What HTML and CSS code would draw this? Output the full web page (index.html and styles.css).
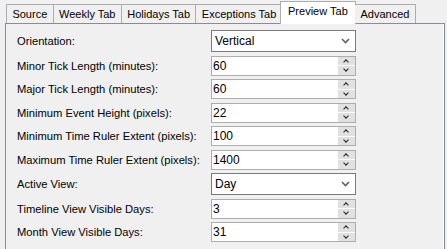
FILE: index.html
```html
<!DOCTYPE html>
<html lang="en">
<head>
    <meta charset="UTF-8">
    <title>Calendar Settings</title>
    <link rel="stylesheet" href="styles.css">
</head>
<body>
    <div class="tabs">
        <div class="tab">Source</div>
        <div class="tab">Weekly Tab</div>
        <div class="tab">Holidays Tab</div>
        <div class="tab">Exceptions Tab</div>
        <div class="tab active">Preview Tab</div>
        <div class="tab">Advanced</div>
    </div>

    <div class="panel">
        <div class="settings">
            <label>Orientation:</label>
            <div class="combo"><span>Vertical</span><svg class="arrow" width="9" height="6" viewBox="0 0 9 6"><path d="M1 1 L4.5 4.5 L8 1" fill="none" stroke="#606060" stroke-width="1.6"/></svg></div>

            <label>Minor Tick Length (minutes):</label>
            <div class="spin"><span class="value">60</span><span class="buttons"><i class="up"></i><i class="down"></i></span></div>

            <label>Major Tick Length (minutes):</label>
            <div class="spin"><span class="value">60</span><span class="buttons"><i class="up"></i><i class="down"></i></span></div>

            <label>Minimum Event Height (pixels):</label>
            <div class="spin"><span class="value">22</span><span class="buttons"><i class="up"></i><i class="down"></i></span></div>

            <label>Minimum Time Ruler Extent (pixels):</label>
            <div class="spin"><span class="value">100</span><span class="buttons"><i class="up"></i><i class="down"></i></span></div>

            <label>Maximum Time Ruler Extent (pixels):</label>
            <div class="spin"><span class="value">1400</span><span class="buttons"><i class="up"></i><i class="down"></i></span></div>

            <label>Active View:</label>
            <div class="combo"><span>Day</span><svg class="arrow" width="9" height="6" viewBox="0 0 9 6"><path d="M1 1 L4.5 4.5 L8 1" fill="none" stroke="#606060" stroke-width="1.6"/></svg></div>

            <label>Timeline View Visible Days:</label>
            <div class="spin"><span class="value">3</span><span class="buttons"><i class="up"></i><i class="down"></i></span></div>

            <label>Month View Visible Days:</label>
            <div class="spin"><span class="value">31</span><span class="buttons"><i class="up"></i><i class="down"></i></span></div>
        </div>
    </div>
</body>
</html>
```

FILE: styles.css
```css
body {
    margin: 0;
    background: #f0f0f0;
    font-family: "Liberation Sans", Arial, sans-serif;
    font-size: 11px;
    color: #000;
    overflow: hidden;
}
.tabs {
    display: flex;
    align-items: flex-end;
    height: 23px;
    padding-left: 6px;
    position: relative;
    z-index: 1;
}
.tab {
    height: 18px;
    line-height: 18px;
    border: 1px solid #adadad;
    border-bottom: none;
    margin-right: -1px;
    padding: 0 5.4px;
    background: #f0f0f0;
}
.tab.active {
    height: 22px;
    line-height: 19px;
    margin: 0 -1px -1px -2px;
    padding: 0 7.4px;
    background: #fff;
}
.tab.active + .tab {
    border-left: none;
}
.panel {
    width: 438px;
    height: 240px;
    margin-left: 5px;
    border: 1px solid #898c95;
    border-right-color: #828790;
    box-shadow: inset -3px 0 0 -2px #fff;
}
.settings {
    display: grid;
    grid-template-columns: 194px 145px;
    row-gap: 3.5px;
    align-items: center;
    padding: 6px 0 0 11px;
}
.settings label {
    white-space: nowrap;
    font-size: 11.2px;
}
.combo {
    height: 22px;
    box-sizing: border-box;
    border: 1px solid #7a7a7a;
    background: #fff;
    display: flex;
    justify-content: space-between;
    align-items: center;
    padding: 0 5px 0 3px;
    font-size: 12px;
}
.spin {
    height: 20px;
    box-sizing: border-box;
    border: 1px solid #adadad;
    background: #fff;
    display: flex;
    font-size: 12px;
}
.spin .value {
    flex: 1;
    padding-left: 1px;
    line-height: 18px;
}
.spin .buttons {
    width: 17px;
    display: flex;
    flex-direction: column;
    gap: 1px;
}
.spin .buttons i {
    flex: 1;
    background: #e1e1e1;
    position: relative;
}
.spin .buttons i::after {
    content: "";
    position: absolute;
    left: 6px;
    width: 3px;
    height: 3px;
    border-left: 1.3px solid #202020;
    border-top: 1.3px solid #202020;
}
.spin .buttons .up::after {
    top: 3px;
    transform: rotate(45deg);
}
.spin .buttons .down::after {
    top: 1px;
    transform: rotate(225deg);
}
```
